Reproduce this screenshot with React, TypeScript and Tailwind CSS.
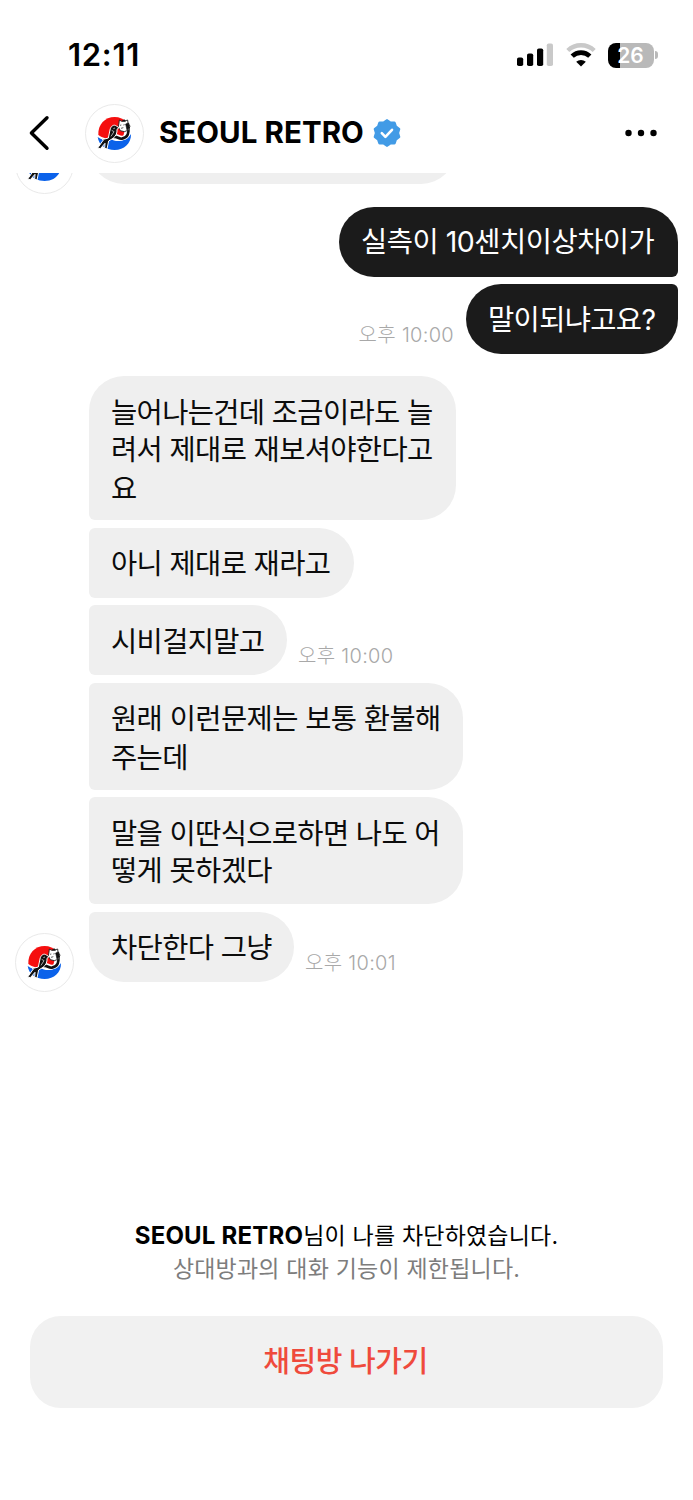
import clsx from 'clsx'

type Message = {
  lines: string[]
  width: string
  shape: string
  spacing?: string
  time?: string
  avatar?: boolean
}

const sent: Message[] = [
  { lines: ['실측이 10센치이상차이가'], width: 'w-[339px]', shape: 'rounded-[35px] rounded-br-[6px]', spacing: 'pt-[16.5px] pb-[16.5px] tracking-[-0.5px]' },
  { lines: ['말이되냐고요?'], width: 'w-[212px]', shape: 'rounded-[35px] rounded-tr-[6px]', spacing: 'pt-[16.5px] pb-[16.5px] tracking-[-0.65px]', time: '오후 10:00' },
]

const received: Message[] = [
  { lines: ['늘어나는건데 조금이라도 늘', '려서 제대로 재보셔야한다고', '요'], width: 'w-[367px]', shape: 'rounded-[35px] rounded-bl-[6px]', spacing: 'pt-[17.5px] pb-[13.5px] tracking-[-0.65px] [&>p:last-child]:pt-[2px]' },
  { lines: ['아니 제대로 재라고'], width: 'w-[265px]', shape: 'rounded-r-[35px] rounded-l-[6px]' },
  { lines: ['시비걸지말고'], width: 'w-[198px]', shape: 'rounded-r-[35px] rounded-l-[6px]', time: '오후 10:00' },
  { lines: ['원래 이런문제는 보통 환불해', '주는데'], width: 'w-[374px]', shape: 'rounded-r-[35px] rounded-l-[6px]', spacing: 'pt-[17.5px] pb-[13.5px] tracking-[-0.6px] [&>p:last-child]:pt-[2px]' },
  { lines: ['말을 이딴식으로하면 나도 어', '떻게 못하겠다'], width: 'w-[374px]', shape: 'rounded-r-[35px] rounded-l-[6px]' },
  { lines: ['차단한다 그냥'], width: 'w-[205px]', shape: 'rounded-[35px] rounded-tl-[6px]', time: '오후 10:01', avatar: true },
]

function Avatar() {
  return (
    <svg viewBox="0 0 177 177" className="h-[59px] w-[59px] shrink-0" fill="none">
      <circle cx="88.5" cy="88.5" r="87" fill="#fff" stroke="#e9e9e9" strokeWidth="3" />
      <path d="M40 93C38 62 60 39 89 39c14 0 28 6 36 15l-10 42-35 8c-14 2-27-2-40-11z" fill="#f50f0f" />
      <path d="M38 99c14 9 25 9 38 5 17 12 45 10 62-14 1 29-21 48-49 48-26 0-48-15-51-39z" fill="#0b62ea" />
      {/* tiger */}
      <path d="M86 97c8-4 15 7 27 5 15-2 20-16 17-30" stroke="#fff" strokeWidth="14" strokeLinecap="round" />
      <path d="M88 99c9-2 13 7 23 5 18-3 22-19 18-35l-7-10" stroke="#111" strokeWidth="8" strokeLinecap="round" />
      <path d="M102 57l1-9 7 4 9-1 9-3 1 10 6 8-4 12-13 5-12-3-6-11z" fill="#fff" stroke="#111" strokeWidth="2.5" />
      <path d="M112 51l6-4 3 5zM122 60l9-3 2 15-7 6zM105 64l4-1M115 63l4-1M108 73l7-2" fill="#111" stroke="#111" strokeWidth="2" />
      <path d="M101 87l8-3 3 7-8 2z" fill="#f50f0f" />
      {/* magpie */}
      <path d="M39 96l16 10 15-4 5-24c2-12 12-18 19-12l8 5-6 5c1 11-3 20-12 27l-13 8-5 24-7-2 1-15-14 16-8-2 17-24z" fill="#111" stroke="#fff" strokeWidth="3" strokeLinejoin="round" />
      <path d="M80 79l7 4-9 14M85 74l5-2" stroke="#aaa" strokeWidth="3" />
    </svg>
  )
}

function VerifiedBadge() {
  const points = Array.from({ length: 20 }, (_, i) => {
    const r = i % 2 === 0 ? 12.4 : 10.6
    const a = (i * Math.PI) / 10 - Math.PI / 2
    return `${14 + r * Math.cos(a)},${14 + r * Math.sin(a)}`
  }).join(' ')

  return (
    <svg viewBox="0 0 28 28" className="ml-[9.5px] h-7 w-7">
      <polygon points={points} fill="#429be6" stroke="#429be6" strokeWidth="3" strokeLinejoin="round" />
      <path d="M8.8 14.2l3.6 3.6 6.6-7" fill="none" stroke="#fff" strokeWidth="2.6" strokeLinecap="round" strokeLinejoin="round" />
    </svg>
  )
}

function StatusBar() {
  return (
    <div className="flex h-[103.5px] items-start justify-between pt-[42px] pr-[35px] pl-[68px]">
      <span className="text-[31px] leading-[26px] font-semibold tracking-[0.7px]">12:11</span>
      <div className="flex h-[26px] items-center">
        <svg viewBox="0 0 36 24" className="mr-[13px] h-6 w-9">
          <rect x="0" y="14.5" width="6.2" height="8.5" rx="1.8" />
          <rect x="10" y="10.5" width="6.2" height="12.5" rx="1.8" />
          <rect x="20" y="5.5" width="6.2" height="17.5" rx="1.8" />
          <rect x="29.8" y="0.5" width="6.2" height="22.5" rx="1.8" fill="#c9c9c9" />
        </svg>
        <svg viewBox="0 0 30 24" className="mr-[12px] h-6 w-[30px]" fill="none">
          <path d="M1.8 7.5a19.2 19.2 0 0 1 26.4 0" stroke="#c9c9c9" strokeWidth="4.4" />
          <path d="M6.2 13.2a12.6 12.6 0 0 1 17.6 0" stroke="#000" strokeWidth="4.6" />
          <path d="M15 23.4l-4.8-4.6a7 7 0 0 1 9.6 0z" fill="#000" />
        </svg>
        <div className="flex h-[25px] w-[46px] items-center justify-center rounded-[8px] bg-linear-to-r from-black from-[26%] to-[#b9b9b9] to-[26%] text-[21px] leading-none font-semibold text-white">
          26
        </div>
        <div className="ml-[1.5px] h-2 w-[3px] rounded-r-full bg-[#b9b9b9]" />
      </div>
    </div>
  )
}

function Header() {
  return (
    <header className="flex h-[69.5px] items-start pr-[35px] pl-[28px]">
      <svg viewBox="0 0 24 40" className="mt-[9.5px] mr-[33px] h-10 w-6" fill="none">
        <path d="M19 4.7L3.4 20 19 35.3" stroke="#000" strokeWidth="3.4" strokeLinecap="round" strokeLinejoin="round" />
      </svg>
      <Avatar />
      <div className="ml-[15px] flex h-[58px] items-center">
        <h1 className="text-[29.5px] font-bold tracking-[0.05px]">SEOUL RETRO</h1>
        <VerifiedBadge />
      </div>
      <svg viewBox="0 0 34 8" className="mt-[25.5px] ml-auto h-2 w-[34px]">
        <circle cx="4.5" cy="4" r="3.2" />
        <circle cx="17" cy="4" r="3.2" />
        <circle cx="29.5" cy="4" r="3.2" />
      </svg>
    </header>
  )
}

function Bubble({ message, dark }: { message: Message; dark?: boolean }) {
  return (
    <div
      className={clsx(
        'shrink-0 pl-[22px] text-[28.5px] leading-[37px] whitespace-nowrap',
        message.width,
        message.shape,
        message.spacing ?? 'pt-[17.5px] pb-[15.5px] tracking-[-0.65px]',
        dark ? 'bg-[#1b1b1b] text-white' : 'bg-[#efefef] text-[#0c0c0c]',
      )}
    >
      {message.lines.map(line => (
        <p key={line}>{line}</p>
      ))}
    </div>
  )
}

function Time({ children }: { children: string }) {
  return <span className="pb-[4px] text-[20px] leading-[30px] font-light tracking-[0.3px] text-[#a8a8a8]">{children}</span>
}

export default function App() {
  return (
    <div className="flex h-[1500px] w-[693px] flex-col overflow-hidden bg-white font-['Inter','Noto_Sans_CJK_KR',sans-serif] text-black">
      <StatusBar />
      <Header />

      <main className="flex flex-col">
        {/* tail of the previous message, scrolled under the header */}
        <div className="flex h-[20.5px] items-end overflow-hidden pl-[15px]">
          <Avatar />
          <div className="mb-[10px] ml-[15px] h-[70px] w-[367px] shrink-0 rounded-[40px] bg-[#efefef]" />
        </div>

        <div className="mt-[13px] flex flex-col gap-[7.5px] pr-[15px]">
          {sent.map(m => (
            <div key={m.lines[0]} className="flex items-end justify-end gap-[12px]">
              {m.time && <Time>{m.time}</Time>}
              <Bubble message={m} dark />
            </div>
          ))}
        </div>

        <div className="mt-[22px] flex flex-col gap-[7.6px]">
          {received.map(m => (
            <div key={m.lines[0]} className="flex items-end">
              <div className="-mb-[10px] w-[89px] shrink-0 pl-[15px]">{m.avatar && <Avatar />}</div>
              <Bubble message={m} />
              {m.time && <div className="ml-[11px] flex"><Time>{m.time}</Time></div>}
            </div>
          ))}
        </div>
      </main>

      <footer className="mt-auto px-[30px] pb-[92px]">
        <div className="text-center text-[23px] leading-[33px] tracking-[0.2px]">
          <p><b className="text-[24px] font-bold tracking-[0.2px]">SEOUL RETRO</b>님이 나를 차단하였습니다.</p>
          <p className="text-[#7d7d7d]">상대방과의 대화 기능이 제한됩니다.</p>
        </div>
        <button className="mt-[30px] flex h-[92px] w-full items-center justify-center rounded-[31px] bg-[#f1f1f1] pr-[2px] text-[29px] font-medium tracking-[-0.5px] text-[#ef4a3c]">
          채팅방 나가기
        </button>
      </footer>
    </div>
  )
}
